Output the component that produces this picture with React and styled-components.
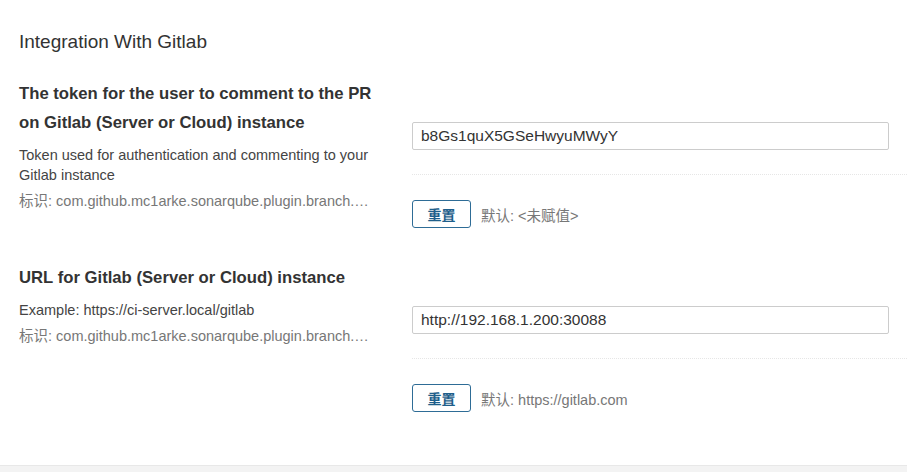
import styled, { createGlobalStyle } from 'styled-components';

const GlobalStyle = createGlobalStyle`
  html, body {
    margin: 0;
    padding: 0;
    background: #fff;
  }
  body {
    font-family: "Liberation Sans", Arial, "Noto Sans CJK SC", sans-serif;
    color: #333;
  }
`;

const Page = styled.div`
  width: 907px;
  height: 472px;
  display: flex;
  flex-direction: column;
  overflow: hidden;
`;

const Content = styled.div`
  flex: 1;
  padding: 30px 0 0 19px;
`;

const SectionTitle = styled.h2`
  margin: 0 0 25px;
  font-size: 19px;
  line-height: 24px;
  font-weight: 400;
  color: #333;
`;

const SettingRow = styled.div`
  display: flex;
  margin-bottom: ${({ last }) => (last ? '0' : '35px')};
`;

/**
 * 왼쪽 설명 영역
 */
const Info = styled.div`
  width: 372px;
  margin-right: 21px;
  flex-shrink: 0;
`;

const SettingName = styled.h3`
  margin: 0;
  font-size: 16.7px;
  line-height: 29px;
  font-weight: 700;
  color: #333;
`;

const Description = styled.p`
  margin: 8px 0 0;
  font-size: 14.5px;
  line-height: 20px;
  color: #444;
`;

const SettingKey = styled.div`
  margin-top: 6px;
  font-size: 14.5px;
  line-height: 20px;
  color: #777;
  white-space: nowrap;
`;

/**
 * 오른쪽 입력 영역
 */
const Field = styled.div`
  flex: 1;
  padding-top: 43px;
`;

const TextInput = styled.input`
  display: block;
  box-sizing: border-box;
  width: 477px;
  height: 28px;
  padding: 0 8px;
  border: 1px solid #ccc;
  border-radius: 2px;
  font-family: inherit;
  font-size: 15.5px;
  color: #333;
  background: #fff;
  outline: none;
`;

const Divider = styled.div`
  margin: 24px 0 25px;
  border-top: 1px dotted #e6e6e6;
`;

const ResetRow = styled.div`
  display: flex;
  align-items: center;
  gap: 10px;
`;

const ResetButton = styled.button`
  box-sizing: border-box;
  width: 59px;
  height: 28px;
  padding: 0;
  border: 1px solid #2e6c96;
  border-radius: 3px;
  background: #fff;
  color: #1f5f8b;
  font-family: "Noto Sans CJK SC", sans-serif;
  font-size: 14px;
  font-weight: 700;
  cursor: pointer;
`;

const DefaultValue = styled.span`
  font-size: 14.5px;
  color: #777;
`;

const Footer = styled.div`
  height: 6px;
  background: #f3f3f3;
  border-top: 1px solid #e8e8e8;
`;

const settings = [
  {
    id: 'token',
    name: 'The token for the user to comment to the PR on Gitlab (Server or Cloud) instance',
    description: 'Token used for authentication and commenting to your Gitlab instance',
    key: 'com.github.mc1arke.sonarqube.plugin.branch.…',
    value: 'b8Gs1quX5GSeHwyuMWyY',
    defaultValue: '<未赋值>',
  },
  {
    id: 'url',
    name: 'URL for Gitlab (Server or Cloud) instance',
    description: 'Example: https://ci-server.local/gitlab',
    key: 'com.github.mc1arke.sonarqube.plugin.branch.…',
    value: 'http://192.168.1.200:30088',
    defaultValue: 'https://gitlab.com',
  },
];

export default function App() {
  return (
    <>
      <GlobalStyle />
      <Page>
        <Content>
          <SectionTitle>Integration With Gitlab</SectionTitle>
          {settings.map((s, i) => (
            <SettingRow key={s.id} last={i === settings.length - 1}>
              <Info>
                <SettingName>{s.name}</SettingName>
                <Description>{s.description}</Description>
                <SettingKey>标识: {s.key}</SettingKey>
              </Info>
              <Field>
                <TextInput defaultValue={s.value} />
                <Divider />
                <ResetRow>
                  <ResetButton>重置</ResetButton>
                  <DefaultValue>默认: {s.defaultValue}</DefaultValue>
                </ResetRow>
              </Field>
            </SettingRow>
          ))}
        </Content>
        <Footer />
      </Page>
    </>
  );
}
